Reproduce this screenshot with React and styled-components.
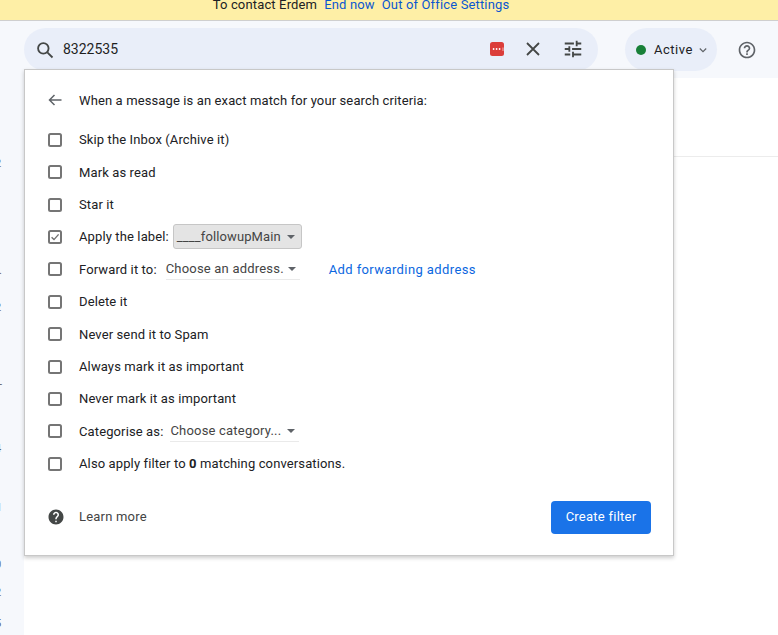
import React from 'react'
import styled, { createGlobalStyle } from 'styled-components'

const GlobalStyle = createGlobalStyle`
  html, body {
    margin: 0;
    height: 100%;
    overflow: hidden;
  }
  body {
    background: #f6f8fc;
    font-family: Roboto, "Liberation Sans", Arial, sans-serif;
    font-size: 13px;
    color: #202124;
  }
`

const rows = [
  { text: 'Skip the Inbox (Archive it)' },
  { text: 'Mark as read' },
  { text: 'Star it' },
  { text: 'Apply the label:', checked: true, label: '____followupMain' },
  { text: 'Forward it to:', select: 'Choose an address.', width: 134, offset: 9, link: 'Add forwarding address' },
  { text: 'Delete it' },
  { text: 'Never send it to Spam' },
  { text: 'Always mark it as important' },
  { text: 'Never mark it as important' },
  { text: 'Categorise as:', select: 'Choose category...', width: 129, offset: 7 },
  { text: <>Also apply filter to <b>0</b> matching conversations.</> },
]

const counts = [
  { label: '2', top: 158, left: -5 },
  { label: '.', top: 265, left: -1 },
  { label: '2', top: 302, left: -5 },
  { label: '-', top: 379, left: -1 },
  { label: '4', top: 443, left: -5 },
  { label: '1', top: 502, left: -4 },
  { label: '0', top: 559, left: -5 },
  { label: '2', top: 587, left: -5 },
  { label: '5', top: 618, left: -5 },
]

function Check({ checked }) {
  return (
    <CheckBox viewBox="0 0 14 14">
      <rect x="1" y="1" width="12" height="12" rx="1.5" fill="none" stroke="#757575" strokeWidth="2" />
      {checked && <path d="M3.6 7.2 L6 9.6 L10.6 4.4" fill="none" stroke="#6f6f6f" strokeWidth="1.4" />}
    </CheckBox>
  )
}

function App() {
  return (
    <>
      <GlobalStyle />
      <Banner>
        <span>To contact Erdem</span>
        <BannerLink>End now</BannerLink>
        <BannerLink>Out of Office Settings</BannerLink>
      </Banner>
      <Page>
        <Rail>
          {counts.map((c, i) => <RailCount key={i} $top={c.top} $left={c.left}>{c.label}</RailCount>)}
        </Rail>
        <Content>
          <TopBar>
            <SearchBar>
              <svg width="20" height="20" viewBox="0 0 24 24" fill="none" stroke="#444746" strokeWidth="2.2">
                <circle cx="10" cy="10" r="6.3" />
                <path d="M14.8 14.8 L21 21" />
              </svg>
              <SearchText>8322535</SearchText>
              <KeyIcon viewBox="0 0 14 14">
                <rect width="14" height="14" rx="2.5" fill="#db3d3a" />
                <path d="M13 5.5 V9" stroke="#f2b6b4" strokeWidth="1" />
                <circle cx="3.6" cy="7" r="0.9" fill="#fff" />
                <circle cx="6.6" cy="7" r="0.9" fill="#fff" />
                <circle cx="9.6" cy="7" r="0.9" fill="#fff" />
              </KeyIcon>
              <IconSlot>
                <svg width="18" height="18" viewBox="0 0 18 18" fill="none" stroke="#444746" strokeWidth="1.8">
                  <path d="M3 3 L15 15 M15 3 L3 15" />
                </svg>
              </IconSlot>
              <IconSlot>
                <svg width="22" height="22" viewBox="0 0 24 24" fill="#444746">
                  <path d="M3 17v2h6v-2H3zM3 5v2h10V5H3zm10 16v-2h8v-2h-8v-2h-2v6h2zM7 9v2H3v2h4v2h2V9H7zm14 4v-2H11v2h10zm-6-4h2V7h4V5h-4V3h-2v6z" />
                </svg>
              </IconSlot>
            </SearchBar>
            <StatusPill>
              <StatusDot />
              <span>Active</span>
              <svg width="10" height="10" viewBox="0 0 10 10" fill="none" stroke="#5f6368" strokeWidth="1.2">
                <path d="M1.8 3.5 L5 6.6 L8.2 3.5" />
              </svg>
            </StatusPill>
            <HelpButton>
              <svg width="20" height="20" viewBox="0 0 24 24" fill="#5f6368">
                <path d="M11 18h2v-2h-2v2zm1-16C6.48 2 2 6.48 2 12s4.48 10 10 10 10-4.48 10-10S17.52 2 12 2zm0 18c-4.41 0-8-3.59-8-8s3.59-8 8-8 8 3.59 8 8-3.59 8-8 8zm0-14c-2.21 0-4 1.79-4 4h2c0-1.1.9-2 2-2s2 .9 2 2c0 2-3 1.75-3 5h2c0-2.25 3-2.5 3-5 0-2.21-1.79-4-4-4z" />
              </svg>
            </HelpButton>
          </TopBar>
          <MainPanel>
            <PanelDivider />
          </MainPanel>
        </Content>
      </Page>

      <FilterDialog>
        <DialogHeader>
          <LeadSlot>
            <svg width="16" height="16" viewBox="0 0 16 16" fill="none" stroke="#5f6368" strokeWidth="1.5">
              <path d="M14.5 8 H2.5 M7.5 3 L2.5 8 L7.5 13" />
            </svg>
          </LeadSlot>
          <span>When a message is an exact match for your search criteria:</span>
        </DialogHeader>
        <OptionList>
          {rows.map((row, i) => (
            <OptionRow key={i}>
              <LeadSlot><Check checked={row.checked} /></LeadSlot>
              <span>{row.text}</span>
              {row.label && (
                <LabelButton>
                  <span>{row.label}</span>
                  <Caret />
                </LabelButton>
              )}
              {row.select && (
                <SelectField $width={row.width} $offset={row.offset}>
                  <span>{row.select}</span>
                  <Caret />
                </SelectField>
              )}
              {row.link && <ForwardLink>{row.link}</ForwardLink>}
            </OptionRow>
          ))}
        </OptionList>
        <DialogFooter>
          <FooterHelp>
            <svg width="18" height="18" viewBox="0 0 24 24" fill="#444746">
              <path d="M12 2C6.48 2 2 6.48 2 12s4.48 10 10 10 10-4.48 10-10S17.52 2 12 2zm1 17h-2v-2h2v2zm2.07-7.75l-.9.92C13.45 12.9 13 13.5 13 15h-2v-.5c0-1.1.45-2.1 1.17-2.83l1.24-1.26c.37-.36.59-.86.59-1.41 0-1.1-.9-2-2-2s-2 .9-2 2H8c0-2.21 1.79-4 4-4s4 1.79 4 4c0 .88-.36 1.68-.93 2.25z" />
            </svg>
          </FooterHelp>
          <LearnMore>Learn more</LearnMore>
          <CreateButton>Create filter</CreateButton>
        </DialogFooter>
      </FilterDialog>
    </>
  )
}

export default App

const Banner = styled.div`
  height: 20px;
  background: #feefa6;
  border-bottom: 1px solid #cfcfcf;
  display: flex;
  justify-content: center;
  align-items: flex-end;
  gap: 7px;
  padding-right: 56px;
  line-height: 12px;
  overflow: hidden;
  font-size: 13px;
  letter-spacing: 0.15px;
  span { padding-bottom: 9px; }
`

const BannerLink = styled.span`
  color: #0b57d0;
`

const Page = styled.div`
  display: flex;
  height: 614px;
`

const Rail = styled.div`
  position: relative;
  width: 24px;
  flex-shrink: 0;
  overflow: hidden;
`

const RailCount = styled.span`
  position: absolute;
  top: ${p => p.$top - 21}px;
  left: ${p => p.$left}px;
  font-size: 11px;
  line-height: 12px;
  color: #5f6368;
`

const Content = styled.div`
  flex: 1;
  display: flex;
  flex-direction: column;
`

const TopBar = styled.div`
  height: 57px;
  flex-shrink: 0;
  display: flex;
  align-items: flex-start;
  padding-top: 7px;
  box-sizing: border-box;
`

const SearchBar = styled.div`
  width: 574px;
  height: 43px;
  border-radius: 22px;
  background: #e9eef9;
  display: flex;
  align-items: center;
  padding: 0 13px 0 11px;
  box-sizing: border-box;
`

const SearchText = styled.span`
  flex: 1;
  margin-left: 8px;
  margin-bottom: 1px;
  font-size: 14px;
  color: #1f1f1f;
`

const KeyIcon = styled.svg`
  width: 14px;
  height: 14px;
  margin-right: 17px;
  margin-bottom: 1px;
`

const IconSlot = styled.div`
  width: 24px;
  height: 24px;
  margin-bottom: 2px;
  display: flex;
  align-items: center;
  justify-content: center;
  & + & { margin-left: 16px; }
`

const StatusPill = styled.div`
  width: 92px;
  height: 43px;
  margin-left: 27px;
  border-radius: 22px;
  background: #e9eef9;
  display: flex;
  align-items: center;
  padding-left: 11px;
  box-sizing: border-box;
  font-size: 13px;
  letter-spacing: 0.5px;
  span { margin: 0 5px 0 8px; }
`

const StatusDot = styled.i`
  width: 10px;
  height: 10px;
  border-radius: 50%;
  background: #188038;
`

const HelpButton = styled.div`
  width: 24px;
  height: 43px;
  margin-left: 18px;
  display: flex;
  align-items: center;
  justify-content: center;
`

const MainPanel = styled.div`
  flex: 1;
  background: #fff;
  padding-top: 78px;
`

const PanelDivider = styled.div`
  height: 1px;
  background: #ececec;
`

const FilterDialog = styled.div`
  position: absolute;
  left: 24px;
  top: 69px;
  width: 650px;
  height: 487px;
  box-sizing: border-box;
  background: #fff;
  border: 1px solid #c8c8c8;
  box-shadow: 0 2px 4px rgba(0, 0, 0, 0.2);
  padding: 0 22px 0 22px;
  display: flex;
  flex-direction: column;
  letter-spacing: 0.12px;
`

const DialogHeader = styled.div`
  display: flex;
  align-items: center;
  height: 20px;
  margin-top: 20px;
`

const LeadSlot = styled.div`
  width: 32px;
  flex-shrink: 0;
  display: flex;
  align-items: center;
`

const OptionList = styled.div`
  margin-top: 13.6px;
  display: flex;
  flex-direction: column;
`

const OptionRow = styled.div`
  display: flex;
  align-items: center;
  height: 32.4px;
`

const CheckBox = styled.svg`
  width: 14px;
  height: 14px;
  margin-left: 1px;
`

const Caret = styled.i`
  width: 0;
  height: 0;
  border-left: 4px solid transparent;
  border-right: 4px solid transparent;
  border-top: 4px solid #5f6368;
`

const LabelButton = styled.div`
  margin-left: 4px;
  width: 129px;
  height: 25px;
  box-sizing: border-box;
  display: flex;
  align-items: center;
  justify-content: space-between;
  padding: 0 6px 0 3px;
  background: #e4e4e4;
  border: 1px solid #c6c6c6;
  border-radius: 3px;
  color: #444;
`

const SelectField = styled.div`
  width: ${p => p.$width}px;
  margin-left: ${p => p.$offset}px;
  height: 22px;
  box-sizing: border-box;
  display: flex;
  align-items: center;
  justify-content: space-between;
  padding-right: 4px;
  border-bottom: 1px solid #eaeaea;
  color: #444;
  letter-spacing: 0.2px;
`

const ForwardLink = styled.span`
  margin-left: 29px;
  color: #0b67e0;
  letter-spacing: 0.4px;
`

const DialogFooter = styled.div`
  margin-top: auto;
  margin-bottom: 21px;
  display: flex;
  align-items: center;
  height: 33px;
`

const FooterHelp = styled(LeadSlot)`
  margin-bottom: 2px;
`

const LearnMore = styled.span`
  flex: 1;
  margin-bottom: 2px;
  color: #444;
  letter-spacing: 0.2px;
`

const CreateButton = styled.div`
  width: 100px;
  height: 33px;
  padding-bottom: 2px;
  box-sizing: border-box;
  display: flex;
  align-items: center;
  justify-content: center;
  border-radius: 4px;
  background: #1a73e8;
  color: #fff;
  letter-spacing: 0.25px;
`
